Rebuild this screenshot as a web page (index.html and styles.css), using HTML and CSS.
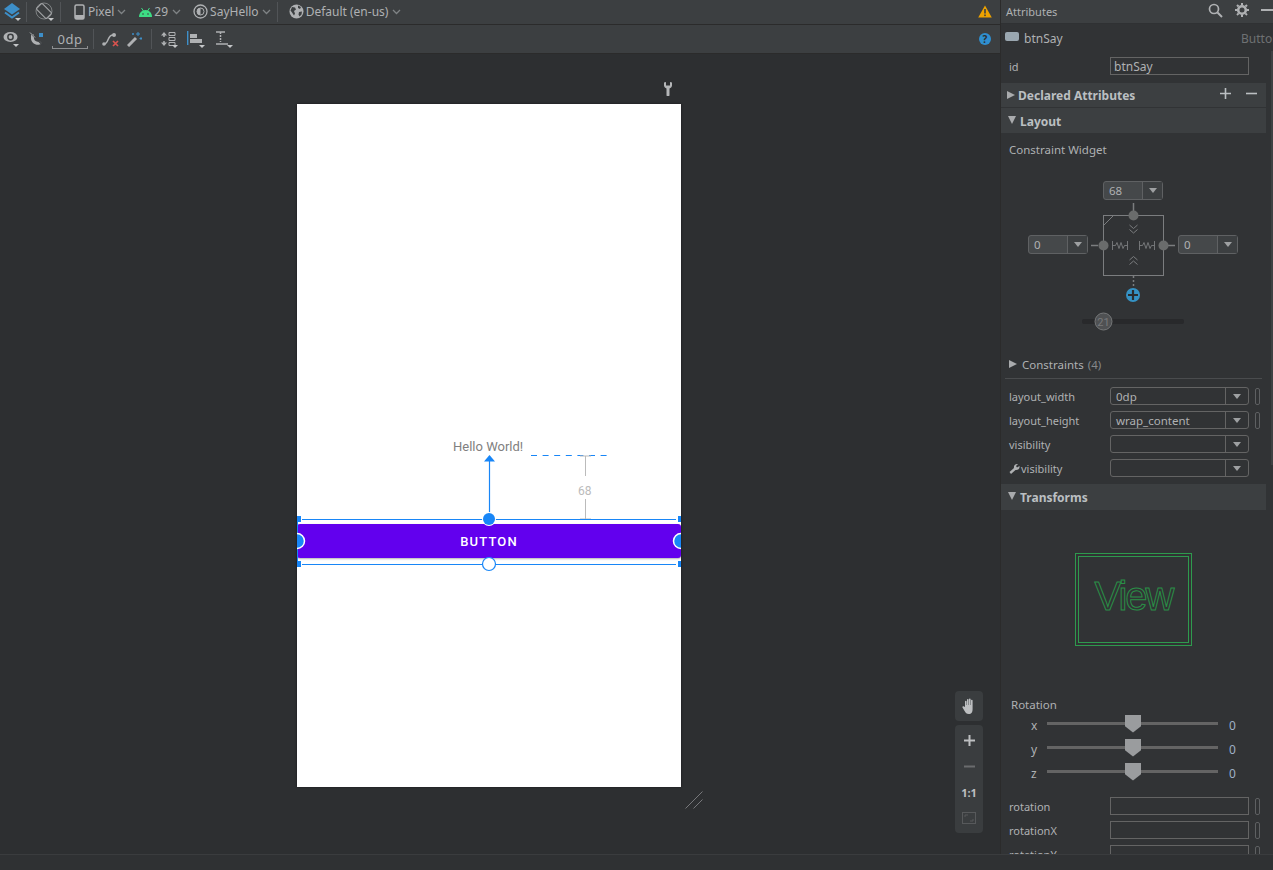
FILE: index.html
```html
<!DOCTYPE html>
<html lang="en">
<head>
    <meta charset="UTF-8">
    <title>SayHello - Layout Editor</title>
    <link rel="stylesheet" href="styles.css">
</head>
<body>
<div class="app">
    <div class="editor">
        <!-- Top toolbar -->
        <div class="toolbar toolbar-top">
            <svg class="ico m2" width="20" height="20" viewBox="0 0 20 20"><path d="M10 1 L18 7 L10 12.5 L2 7Z" fill="#3d8fc9"/><path d="M3 10.5 L10 15.5 L17 10.5" fill="none" stroke="#3d8fc9" stroke-width="2"/><path d="M13 16h6l-3 3z" fill="#c4c6c8"/></svg>
            <span class="sep s4"></span>
            <svg class="ico s8" width="19" height="20" viewBox="0 0 19 20"><circle cx="9" cy="9" r="8" fill="none" stroke="#8d9092" stroke-width="0.800"/><rect x="5" y="2" width="8" height="14" rx="1" transform="rotate(-45 9 9)" fill="#3c3f41" stroke="#a3a5a7" stroke-width="1.100"/><path d="M13 16h6l-3 3z" fill="#c4c6c8"/></svg>
            <span class="sep s6"></span>
            <svg class="ico s13" width="11" height="16" viewBox="0 0 11 16"><rect x="1" y="1" width="9" height="14" rx="1.5" fill="none" stroke="#afb1b3" stroke-width="1.5"/><rect x="1" y="11" width="9" height="4" fill="#afb1b3"/></svg>
            <span class="label s3">Pixel</span>
            <svg class="chev s3" width="9" height="6" viewBox="0 0 9 6"><path d="M1 1l3.5 3.5L8 1" fill="none" stroke="#7f8385" stroke-width="1.3"/></svg>
            <svg class="ico s12" width="15" height="10" viewBox="0 0 15 10"><path d="M1 10C1 6 3.8 3 7.500 3S14 6 14 10Z" fill="#3ddc84"/><path d="M3.500 1l2 3M11.500 1l-2 3" stroke="#3ddc84"/><circle cx="5" cy="7" r="0.8" fill="#3c3f41"/><circle cx="10" cy="7" r="0.8" fill="#3c3f41"/></svg>
            <span class="label s1">29</span>
            <svg class="chev s4" width="9" height="6" viewBox="0 0 9 6"><path d="M1 1l3.5 3.5L8 1" fill="none" stroke="#7f8385" stroke-width="1.3"/></svg>
            <svg class="ico s12" width="15" height="15" viewBox="0 0 15 15"><circle cx="7.500" cy="7.500" r="6.500" fill="none" stroke="#afb1b3" stroke-width="1.3"/><circle cx="7.500" cy="7.500" r="3.500" fill="none" stroke="#afb1b3"/><path d="M7.500 4a3.500 3.500 0 0 0 0 7Z" fill="#afb1b3"/></svg>
            <span class="label s2">SayHello</span>
            <svg class="chev s3" width="9" height="6" viewBox="0 0 9 6"><path d="M1 1l3.5 3.5L8 1" fill="none" stroke="#7f8385" stroke-width="1.3"/></svg>
            <span class="sep s6"></span>
            <svg class="ico s11" width="15" height="15" viewBox="0 0 15 15"><circle cx="7.500" cy="7.500" r="7" fill="#afb1b3"/><path d="M3 3l3 .5 1 2-2 1.500 1 2.500-1 2-2-3-1.500-2zM9 1.500l3 1.500-1 2-2-1zM10 8l3-.5-.5 3-2 2-1-2z" fill="#3c3f41"/></svg>
            <span class="label s2">Default (en-us)</span>
            <svg class="chev s4" width="9" height="6" viewBox="0 0 9 6"><path d="M1 1l3.5 3.5L8 1" fill="none" stroke="#7f8385" stroke-width="1.3"/></svg>
            <svg class="ico warn" width="14" height="13" viewBox="0 0 14 13"><path d="M7 0.500L13.800 12.500H0.200Z" fill="#eda200"/><rect x="6.200" y="4" width="1.600" height="4.500" fill="#3c3f41"/><rect x="6.200" y="9.500" width="1.600" height="1.600" fill="#3c3f41"/></svg>
        </div>

        <!-- Second toolbar -->
        <div class="toolbar toolbar-sub">
            <svg class="ico s3" width="17" height="16" viewBox="0 0 17 16"><ellipse cx="7.500" cy="6" rx="7" ry="5" fill="#afb1b3"/><circle cx="7.500" cy="6" r="3.400" fill="#3c3f41"/><circle cx="7.500" cy="6" r="1.900" fill="#afb1b3"/><path d="M10 13h6l-3 3z" fill="#c4c6c8"/></svg>
            <svg class="ico s9" width="15" height="15" viewBox="0 0 15 15"><path d="M2 2.500h3v4a3.500 3.500 0 0 0 5.500 2.500l2.500 2.500A7 7 0 0 1 2 7Z" fill="#afb1b3"/><rect x="10" y="1" width="4" height="4" fill="#3d8fc9"/><path d="M1 0.500L14 13.500" stroke="#3c3f41" stroke-width="1.400"/><path d="M1 0.500L6 5.500" stroke="#afb1b3" stroke-width="1"/></svg>
            <span class="margin-box s8">0dp</span>
            <span class="sep s5"></span>
            <svg class="ico s8" width="18" height="15" viewBox="0 0 18 15"><path d="M2 12C7 12 5 3 11 3" fill="none" stroke="#afb1b3" stroke-width="1.500"/><circle cx="2" cy="12" r="1.800" fill="#afb1b3"/><circle cx="12" cy="3" r="2" fill="#afb1b3"/><path d="M11 9l5 5M16 9l-5 5" stroke="#d9534f" stroke-width="1.700"/></svg>
            <svg class="ico s7" width="15" height="15" viewBox="0 0 15 15"><path d="M1 14L9 6" stroke="#afb1b3" stroke-width="3"/><path d="M11 0v4M9 2h4M14 5v3M12.500 6.500h3M6 1v2M5 2h2" stroke="#3d8fc9"/></svg>
            <span class="sep s9"></span>
            <svg class="ico s8" width="18" height="17" viewBox="0 0 18 17"><path d="M4 1l3 3.500H1zM4 15l3-3.500H1z" fill="#afb1b3"/><path d="M4 4v2M4 10v2" stroke="#afb1b3" stroke-width="1.500"/><path d="M9 1.500h6v3H9zM9 6.500h6v3H9zM9 11.500h6v3H9z" fill="none" stroke="#afb1b3"/><path d="M12 14h6l-3 3z" fill="#c4c6c8"/></svg>
            <svg class="ico s9" width="18" height="17" viewBox="0 0 18 17"><rect width="1.400" height="14" fill="#3d8fc9"/><rect x="3" y="3" width="7" height="4" fill="#afb1b3"/><rect x="3" y="8" width="12" height="4" fill="#afb1b3"/><path d="M12 14h6l-3 3z" fill="#c4c6c8"/></svg>
            <svg class="ico s10" width="18" height="17" viewBox="0 0 18 17"><path d="M1 1h9M1 13h12" stroke="#afb1b3" stroke-width="1.500"/><path d="M5.500 1v10" stroke="#afb1b3" stroke-width="1.500" stroke-dasharray="2 1"/><path d="M12 14h6l-3 3z" fill="#c4c6c8"/></svg>
            <span class="help">?</span>
        </div>

        <!-- Design surface -->
        <div class="canvas">
            <svg class="wrench" width="10" height="14" viewBox="0 0 10 14"><path d="M1 0.500V3.500C1 5 2.500 6 3.500 6.500V13a1.500 1.500 0 0 0 3 0V6.500C7.500 6 9 5 9 3.500V0.500L7 0V3.500H3V0Z" fill="#b4b6b8"/></svg>
            <div class="device">
                <span class="hello">Hello World!</span>
                <div class="btn-preview">BUTTON</div>
                <span class="dim-label">68</span>
                <svg class="overlay" width="384" height="683" viewBox="0 0 384 683">
                    <path d="M234 351.500h76" stroke="#1886f7" stroke-dasharray="6 5.600"/>
                    <path d="M288.500 352v20M288.500 395v20M283 352h11M283 415h11" stroke="#bbb"/>
                    <path d="M192.500 357v52" stroke="#1886f7" stroke-width="1.200"/>
                    <path d="M187 357.500 L192.500 351 L198 357.500Z" fill="#1886f7"/>
                    <path d="M5 415.500h374M5 460.500h374" stroke="#1886f7"/>
                    <path d="M0.500 415v45" stroke="#1886f7"/>
                    <circle cx="192" cy="415" r="7" fill="#fff"/>
                    <circle cx="192" cy="415" r="6" fill="#1886f7"/>
                    <circle cx="192" cy="460" r="6.500" fill="#fff" stroke="#1886f7" stroke-width="1.200"/>
                    <circle cx="0" cy="437" r="7.500" fill="#1886f7" stroke="#fff" stroke-width="1.500"/>
                    <circle cx="384" cy="437" r="7.500" fill="#1886f7" stroke="#fff" stroke-width="1.500"/>
                    <rect x="-1" y="412" width="5" height="6" fill="#1886f7"/>
                    <rect x="381" y="412" width="5" height="6" fill="#1886f7"/>
                    <rect x="-1" y="457" width="5" height="6" fill="#1886f7"/>
                    <rect x="381" y="457" width="5" height="6" fill="#1886f7"/>
                </svg>
            </div>
            <svg class="resize" width="18" height="18" viewBox="0 0 18 18"><path d="M0.500 17.500L17.500 0.500M8.500 17.500L17.500 8.500" stroke="#8a8c8e" stroke-width="0.800"/></svg>
            <div class="zoom-tools">
                <div class="zoom-box hand-box">
                    <svg width="14" height="16" viewBox="0 0 14 16"><path d="M3 9V3.500a.8.8 0 0 1 1.600 0V7h.4V1.800a.8.800 0 0 1 1.600 0V7H7V1.300a.8.800 0 0 1 1.600 0V7H9V2.500a.8.800 0 0 1 1.600 0V11c0 3-1 5-4 5-2 0-3-1-4-3L0.500 9.500c-.5-1 .8-1.800 1.500-1Z" fill="#bdbfc1"/></svg>
                </div>
                <div class="zoom-box zoom-stack">
                    <span class="zoom-btn"><svg width="11" height="11" viewBox="0 0 11 11"><path d="M5.500 0v11M0 5.500h11" stroke="#bdbfc1" stroke-width="2"/></svg></span>
                    <span class="zoom-btn"><svg width="11" height="11" viewBox="0 0 11 11"><path d="M0 5.500h11" stroke="#6a6c6e" stroke-width="2"/></svg></span>
                    <span class="zoom-btn one-one">1:1</span>
                    <span class="zoom-btn"><svg width="14" height="12" viewBox="0 0 14 12"><rect x="0.500" y="0.500" width="13" height="11" fill="none" stroke="#57595b"/><path d="M3 5V3h3M11 7v2H8" fill="none" stroke="#57595b"/></svg></span>
                </div>
            </div>
        </div>
    </div>

    <!-- Attributes panel -->
    <div class="panel">
        <div class="panel-head">
            <span>Attributes</span>
            <svg class="head-ico search" width="15" height="15" viewBox="0 0 15 15"><circle cx="6" cy="6" r="4.500" fill="none" stroke="#afb1b3" stroke-width="1.700"/><path d="M9.500 9.500L14 14" stroke="#afb1b3" stroke-width="2"/></svg>
            <svg class="head-ico" width="14" height="14" viewBox="0 0 14 14"><circle cx="7" cy="7" r="3.800" fill="none" stroke="#afb1b3" stroke-width="2.600"/><path d="M7 0v14M0 7h14M2 2l10 10M12 2L2 12" stroke="#afb1b3" stroke-width="2" stroke-dasharray="2.200 9.600 2.200 0"/></svg>
            <span class="head-min"></span>
        </div>
        <span class="scroll-thumb"></span>
        <div class="panel-scroll">
            <div class="name-row">
                <span class="view-chip"></span>
                <span class="name-text">btnSay</span>
                <span class="name-type">Button</span>
            </div>
            <div class="attr-row id-row">
                <span class="attr-name">id</span>
                <span class="field">btnSay</span>
            </div>

            <div class="section declared">
                <i class="tri-right"></i><span>Declared Attributes</span>
                <svg class="sec-add" width="11" height="11" viewBox="0 0 11 11"><path d="M5.500 0v11M0 5.500h11" stroke="#bbbfc2" stroke-width="1.600"/></svg>
                <svg class="sec-del" width="11" height="11" viewBox="0 0 11 11"><path d="M0 5.500h11" stroke="#bbbfc2" stroke-width="1.600"/></svg>
            </div>
            <div class="section layout-sec">
                <i class="tri-down"></i><span>Layout</span>
            </div>
            <div class="plain-row">Constraint Widget</div>

            <div class="widget">
                <svg width="265" height="185" viewBox="0 0 265 185">
                    <rect x="102.500" y="50.500" width="60" height="60" fill="none" stroke="#7b7d7f"/>
                    <path d="M102.500 60.500L112.500 50.500" stroke="#7b7d7f"/>
                    <path d="M132.500 38v8M90 80.500h7M167 80.500h7" stroke="#7b7d7f" stroke-width="1.500"/>
                    <path d="M132.500 111v10" stroke="#7b7d7f" stroke-width="1.500" stroke-dasharray="2 2"/>
                    <circle cx="132.500" cy="50.500" r="5" fill="#6a6c6c"/>
                    <circle cx="102.500" cy="80.500" r="5" fill="#6a6c6c"/>
                    <circle cx="162.500" cy="80.500" r="5" fill="#6a6c6c"/>
                    <path d="M128.500 60l4 3.500 4-3.500M128.500 64.500l4 3.500 4-3.500M128.500 95l4-3.500 4 3.500M128.500 99.500l4-3.500 4 3.500" fill="none" stroke="#7b7d7f"/>
                    <path d="M111.500 76v9M126.500 76v9M111.500 80.500h3l1.500-3 2 6 2-6 2 6 1.500-3h3M138.500 76v9M153.500 76v9M138.500 80.500h3l1.500-3 2 6 2-6 2 6 1.500-3h3" fill="none" stroke="#7b7d7f" stroke-width="0.900"/>
                    <circle cx="132" cy="130" r="7" fill="#3592c4"/>
                    <path d="M132 125v10M127 130h10" stroke="#2b2d2f" stroke-width="2.200"/>
                    <rect x="81" y="154" width="102" height="5" rx="2" fill="#28292b"/>
                    <circle cx="102.500" cy="156.500" r="8.500" fill="#4f5153" stroke="#767879"/>
                    <text class="knob-text" x="102.500" y="160.500" text-anchor="middle">21</text>
                </svg>
                <div class="combo combo-w w-top"><span class="combo-val">68</span><span class="combo-btn"><i class="tri-small"></i></span></div>
                <div class="combo combo-w w-left"><span class="combo-val">0</span><span class="combo-btn"><i class="tri-small"></i></span></div>
                <div class="combo combo-w w-right"><span class="combo-val">0</span><span class="combo-btn"><i class="tri-small"></i></span></div>
            </div>

            <div class="constraints-row"><i class="tri-right"></i>Constraints <span class="count">(4)</span></div>
            <div class="rule"></div>

            <div class="attr-row">
                <span class="attr-name">layout_width</span>
                <div class="combo"><span class="combo-val">0dp</span><span class="combo-btn"><i class="tri-small"></i></span></div>
                <span class="pill"></span>
            </div>
            <div class="attr-row">
                <span class="attr-name">layout_height</span>
                <div class="combo"><span class="combo-val">wrap_content</span><span class="combo-btn"><i class="tri-small"></i></span></div>
                <span class="pill"></span>
            </div>
            <div class="attr-row">
                <span class="attr-name">visibility</span>
                <div class="combo"><span class="combo-val"></span><span class="combo-btn"><i class="tri-small"></i></span></div>
            </div>
            <div class="attr-row">
                <span class="attr-name tools-name"><svg width="11" height="11" viewBox="0 0 11 11"><path d="M0.500 9L5 5C4.500 3 6 .5 9 1L7 3l1 1.500L10.500 3c.5 3-2 4.500-4 4L2 11Z" fill="#afb1b3"/></svg>visibility</span>
                <div class="combo"><span class="combo-val"></span><span class="combo-btn"><i class="tri-small"></i></span></div>
            </div>

            <div class="section transforms">
                <i class="tri-down"></i><span>Transforms</span>
            </div>
            <div class="view-preview">
                <div class="view-box"><span class="view-text">View</span></div>
            </div>
            <div class="plain-row rotation-title">Rotation</div>
            <div class="slider-row"><span class="axis">x</span><div class="track"><i class="thumb"></i></div><span class="slider-val">0</span></div>
            <div class="slider-row"><span class="axis">y</span><div class="track"><i class="thumb"></i></div><span class="slider-val">0</span></div>
            <div class="slider-row"><span class="axis">z</span><div class="track"><i class="thumb"></i></div><span class="slider-val">0</span></div>
            <div class="attr-row rotation-first">
                <span class="attr-name">rotation</span>
                <span class="field"></span>
                <span class="pill"></span>
            </div>
            <div class="attr-row">
                <span class="attr-name">rotationX</span>
                <span class="field"></span>
                <span class="pill"></span>
            </div>
            <div class="attr-row">
                <span class="attr-name">rotationY</span>
                <span class="field"></span>
                <span class="pill"></span>
            </div>
        </div>
    </div>

    <div class="status-bar"></div>
</div>
</body>
</html>
```

FILE: styles.css
```css
html, body {
    margin: 0;
    padding: 0;
    height: 100%;
    overflow: hidden;
}

body {
    font-family: "Noto Sans", sans-serif;
    font-size: 12px;
    color: #afb1b3;
    background: #2d2f31;
}

.app {
    display: grid;
    grid-template-columns: 1000px 1fr;
    grid-template-rows: 854px 1fr;
    height: 870px;
}

.editor {
    display: flex;
    flex-direction: column;
    min-width: 0;
}

/* toolbars */
.toolbar {
    display: flex;
    align-items: center;
    background: #3c3f41;
    border-bottom: 1px solid #2b2b2b;
    flex-shrink: 0;
}

.toolbar-top {
    height: 23px;
    padding-bottom: 1px;
}

.toolbar-sub {
    height: 28px;
}

.ico, .chev {
    flex-shrink: 0;
}

.sep {
    width: 1px;
    height: 20px;
    background: #515457;
    flex-shrink: 0;
}

.m2 { margin-left: 2px; }
.s1 { margin-left: 1px; }
.s2 { margin-left: 2px; }
.s3 { margin-left: 3px; }
.s4 { margin-left: 4px; }
.s5 { margin-left: 5px; }
.s6 { margin-left: 6px; }
.s7 { margin-left: 7px; }
.s8 { margin-left: 8px; }
.s9 { margin-left: 9px; }
.s10 { margin-left: 10px; }
.s11 { margin-left: 11px; }
.s12 { margin-left: 12px; }
.s13 { margin-left: 13px; }

.label {
    white-space: nowrap;
}

.warn {
    margin-left: auto;
    margin-right: 8px;
}

.margin-box {
    position: relative;
    width: 36px;
    height: 17px;
    line-height: 17px;
    text-align: center;
    font-size: 13px;
    letter-spacing: 0.5px;
    flex-shrink: 0;
}

/* bracket under the margin value */
.margin-box::after {
    content: "";
    position: absolute;
    left: 0;
    right: 0;
    bottom: -1px;
    height: 3px;
    border: 1px solid #8d8f91;
    border-top: 0;
    box-sizing: border-box;
}

.help {
    margin-left: auto;
    margin-right: 9px;
    width: 12px;
    height: 12px;
    border-radius: 50%;
    background: #2f8fd0;
    color: #2b2d2f;
    font-size: 10px;
    font-weight: bold;
    line-height: 12px;
    text-align: center;
}

/* design surface */
.canvas {
    position: relative;
    flex: 1;
    background: #2d2f31;
    overflow: hidden;
}

.wrench {
    position: absolute;
    left: 663px;
    top: 28px;
}

.device {
    position: absolute;
    left: 297px;
    top: 50px;
    width: 384px;
    height: 683px;
    background: #fff;
    overflow: hidden;
    box-shadow: 0 0 2px #17181a;
}

.overlay {
    position: absolute;
    left: 0;
    top: 0;
}

.hello {
    position: absolute;
    left: 156px;
    top: 334px;
    font-family: Roboto, sans-serif;
    font-size: 13px;
    line-height: 17px;
    color: #808080;
}

.dim-label {
    position: absolute;
    left: 281px;
    top: 380px;
    font-family: Roboto, sans-serif;
    font-size: 12px;
    line-height: 14px;
    color: #bbb;
}

.btn-preview {
    position: absolute;
    left: 0;
    top: 420px;
    width: 384px;
    height: 34px;
    line-height: 35px;
    background: #6200ee;
    border-radius: 3px;
    color: #fff;
    text-align: center;
    font-family: Roboto, sans-serif;
    font-size: 13px;
    font-weight: 500;
    letter-spacing: 1.150px;
    box-shadow: 0 1px 2px rgba(0, 0, 0, 0.3);
}

.resize {
    position: absolute;
    left: 685px;
    top: 737px;
}

.zoom-tools {
    position: absolute;
    left: 955px;
    top: 637px;
    display: flex;
    flex-direction: column;
    gap: 4px;
}

.zoom-box {
    width: 28px;
    background: #3a3d3f;
    border-radius: 4px;
}

.hand-box {
    height: 30px;
    display: flex;
    align-items: center;
    justify-content: center;
}

.zoom-stack {
    display: flex;
    flex-direction: column;
    padding: 2px 0;
}

.zoom-btn {
    height: 26px;
    display: flex;
    align-items: center;
    justify-content: center;
}

.one-one {
    font-size: 11px;
    font-weight: bold;
    color: #bdbfc1;
}

/* attributes panel */
.panel {
    position: relative;
    display: flex;
    flex-direction: column;
    background: #313335;
    border-left: 1px solid #2b2b2b;
    overflow: hidden;
    min-width: 0;
}

.panel-head {
    height: 23px;
    flex-shrink: 0;
    display: flex;
    align-items: center;
    padding-left: 5px;
    background: #3c3f41;
    border-bottom: 1px solid #2f3133;
    font-size: 11px;
}

.head-ico {
    margin-left: 12px;
    margin-top: -3px;
    flex-shrink: 0;
}

.search {
    margin-left: auto;
}

.head-min {
    width: 12px;
    height: 2px;
    margin: -3px 0 0 12px;
    background: #afb1b3;
    flex-shrink: 0;
}

.scroll-thumb {
    position: absolute;
    right: 0;
    top: 51px;
    width: 2px;
    height: 414px;
    background: #3f4143;
}

.panel-scroll {
    flex: 1;
    overflow: hidden;
}

.name-row {
    position: relative;
    display: flex;
    align-items: center;
    height: 28px;
    white-space: nowrap;
}

.view-chip {
    width: 14px;
    height: 9px;
    margin: -3px 0 0 4px;
    background: #9aa7b0;
    border-radius: 2px;
}

.name-text {
    margin-left: 5px;
}

.name-type {
    position: absolute;
    left: 240px;
    color: #6e7173;
}

.attr-row {
    display: flex;
    align-items: center;
    height: 24px;
}

.id-row {
    height: 28px;
    margin-bottom: 3px;
}

.attr-name {
    width: 101px;
    margin-left: 8px;
    flex-shrink: 0;
    white-space: nowrap;
    font-size: 11px;
}

.tools-name {
    display: flex;
    align-items: center;
    gap: 1px;
}

.field {
    width: 134px;
    height: 16px;
    line-height: 17px;
    border: 1px solid #646464;
    padding-left: 3px;
    flex-shrink: 0;
}

.combo {
    display: flex;
    width: 139px;
    height: 18px;
    box-sizing: border-box;
    border: 1px solid #646464;
    border-radius: 3px;
    flex-shrink: 0;
}

.combo-val {
    flex: 1;
    padding-left: 5px;
    font-size: 11.500px;
    line-height: 17px;
    white-space: nowrap;
}

.combo-btn {
    width: 22px;
    display: flex;
    align-items: center;
    justify-content: center;
    border-left: 1px solid #646464;
}

.tri-small {
    width: 0;
    height: 0;
    border-left: 4.500px solid transparent;
    border-right: 4.500px solid transparent;
    border-top: 5px solid #9ea0a2;
}

.pill {
    width: 3px;
    height: 15px;
    margin-left: 6px;
    border: 1px solid #5e6062;
    border-radius: 2px;
    flex-shrink: 0;
}

.section {
    display: flex;
    align-items: center;
    width: 265px;
    background: #3c3f41;
    font-weight: bold;
    color: #bbbfc2;
    white-space: nowrap;
}

.declared {
    height: 24px;
    margin-bottom: 1px;
}

.layout-sec {
    height: 24px;
    padding-top: 1px;
}

.transforms {
    height: 26px;
    margin-top: 4px;
}

.tri-right {
    width: 0;
    height: 0;
    margin: 0 3px 0 6px;
    border-top: 4.500px solid transparent;
    border-bottom: 4.500px solid transparent;
    border-left: 8px solid #a9abad;
    flex-shrink: 0;
}

.tri-down {
    width: 0;
    height: 0;
    margin: -3px 4px 0 7px;
    border-left: 4.500px solid transparent;
    border-right: 4.500px solid transparent;
    border-top: 8px solid #a9abad;
    flex-shrink: 0;
}

.sec-add {
    margin-left: auto;
    margin-top: -4px;
}

.sec-del {
    margin: -4px 9px 0 15px;
}

.plain-row {
    height: 32px;
    line-height: 34px;
    padding-left: 8px;
    font-size: 11.500px;
}

.widget {
    position: relative;
    height: 187px;
}

.combo-w {
    position: absolute;
    width: 60px;
    height: 19px;
    background: #45484a;
    border-color: #5f6163;
}

.combo-w .combo-btn {
    width: 19px;
    background: #3c3f41;
    border-color: #5f6163;
}

.w-top { left: 102px; top: 16px; }
.w-left { left: 27px; top: 70px; }
.w-right { left: 177px; top: 70px; }

.knob-text {
    font-family: Roboto, sans-serif;
    font-size: 11px;
    fill: #78797b;
}

.constraints-row {
    display: flex;
    align-items: center;
    height: 24px;
    font-size: 11.500px;
    white-space: nowrap;
}

.constraints-row .tri-right {
    margin-left: 8px;
    margin-right: 5px;
}

.count {
    margin-left: 4px;
    color: #85888a;
}

.rule {
    width: 257px;
    height: 1px;
    margin: 2px 4px 5px;
    background: #4a4c4e;
}

.view-preview {
    height: 184px;
    padding-top: 43px;
    box-sizing: border-box;
}

.view-box {
    width: 117px;
    height: 93px;
    box-sizing: border-box;
    margin-left: 74px;
    padding-bottom: 6px;
    border: 4px double #2e9a4d;
    display: flex;
    align-items: center;
    justify-content: center;
}

.view-text {
    font-family: "Liberation Sans", sans-serif;
    font-size: 40px;
    letter-spacing: -2px;
    color: transparent;
    -webkit-text-stroke: 1px #2a8f47;
}

.rotation-title {
    height: 20px;
    line-height: 22px;
    padding-left: 10px;
}

.slider-row {
    display: flex;
    align-items: center;
    height: 24px;
}

.rotation-title + .slider-row {
    margin-top: -3px;
}

.axis {
    width: 14px;
    margin: 4px 0 0 30px;
    flex-shrink: 0;
}

.track {
    position: relative;
    width: 171px;
    height: 3px;
    margin-left: 2px;
    background: #646464;
    flex-shrink: 0;
}

.thumb {
    position: absolute;
    left: 78px;
    top: -7px;
    width: 16px;
    height: 18px;
    background: #9a9c9e;
    clip-path: polygon(0 0, 100% 0, 100% 65%, 50% 100%, 0 65%);
}

.slider-val {
    margin: 4px 0 0 11px;
    color: #9fb1c6;
}

.rotation-first {
    margin-top: 11px;
}

.status-bar {
    grid-column: 1 / -1;
    background: #2f3133;
    border-top: 1px solid #3a3c3e;
}
```
